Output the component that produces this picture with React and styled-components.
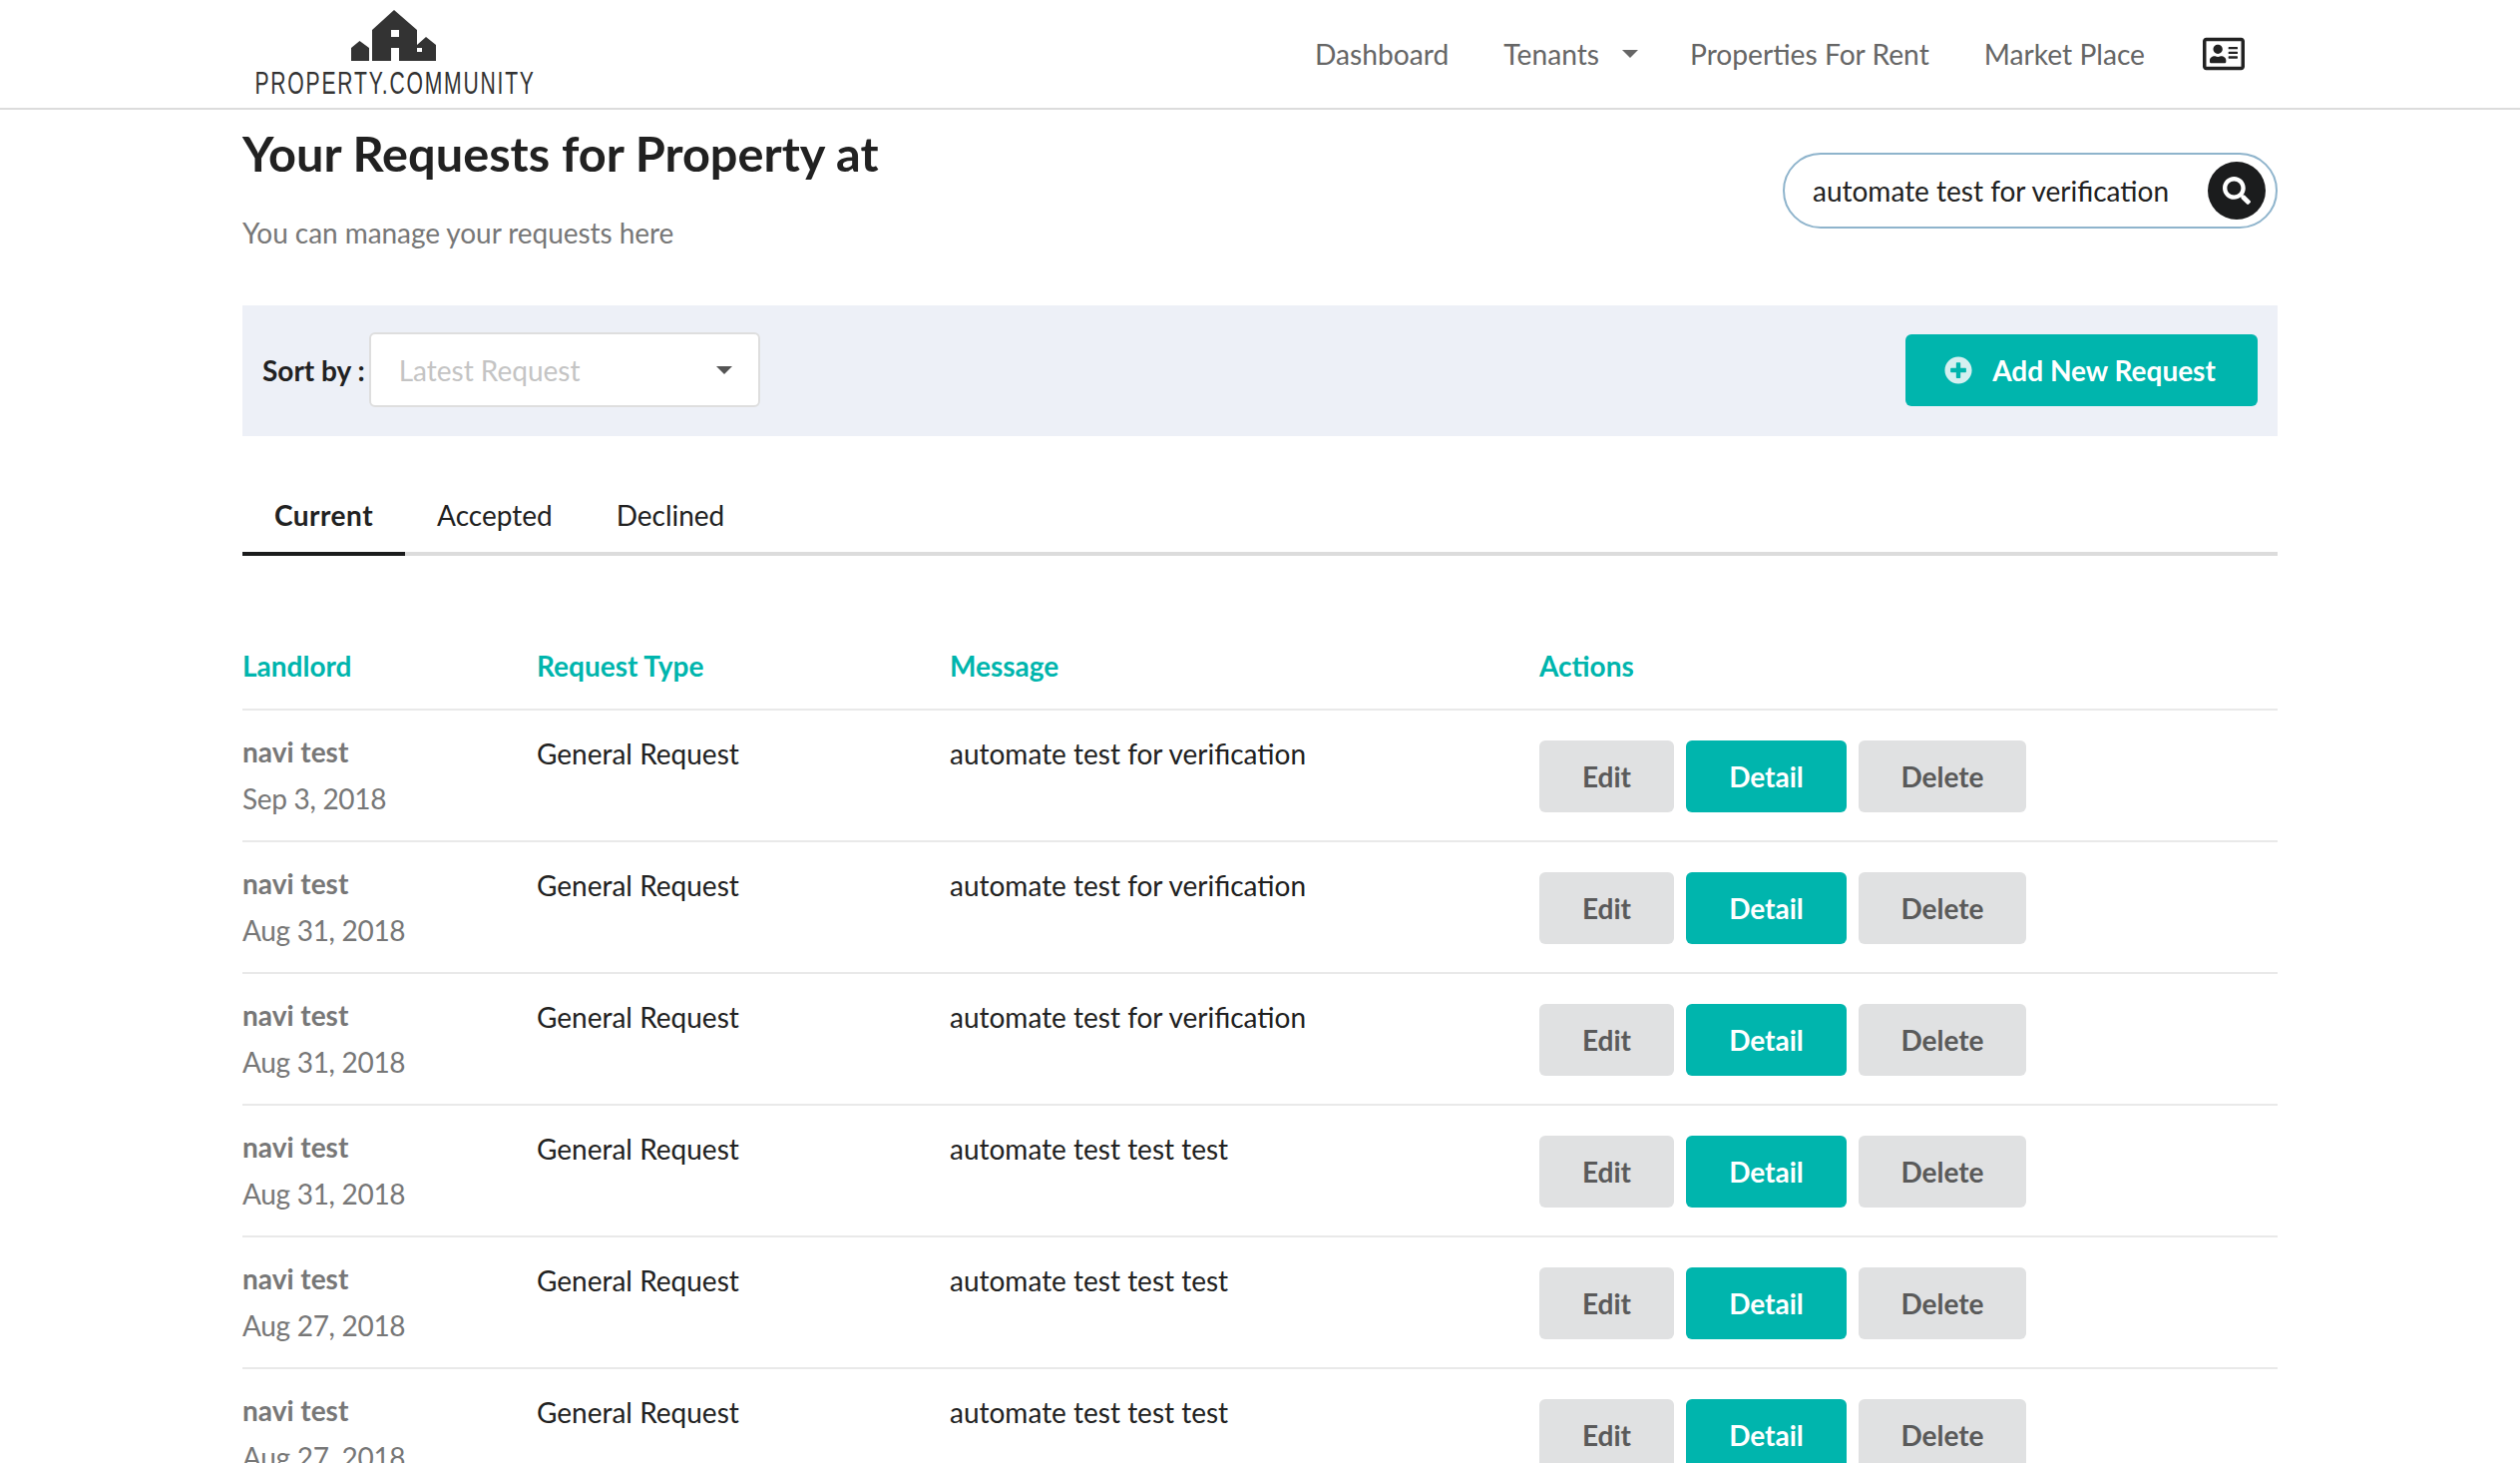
import React from 'react'
import styled, { createGlobalStyle } from 'styled-components'
import { FaSearch, FaPlusCircle, FaRegAddressCard } from 'react-icons/fa'

const GlobalStyle = createGlobalStyle`
    html, body {
        margin: 0;
        padding: 0;
        background: #fff;
        font-family: "Lato", "Liberation Sans", sans-serif;
        overflow: hidden;
    }
    * {
        box-sizing: border-box;
    }
`

const Page = styled.div`
    height: 1466px;
    overflow: hidden;
`

const Header = styled.header`
    height: 110px;
    border-bottom: 2px solid #dcdcdc;
    padding: 0 243px;
    display: flex;
    justify-content: space-between;
`

const Logo = styled.div`
    width: 306px;
    padding-top: 10px;
    display: flex;
    flex-direction: column;
    align-items: center;
`

const LogoMark = styled.svg`
    margin-right: 2px;
`

const LogoText = styled.div`
    font-family: "Liberation Sans", sans-serif;
    font-size: 32px;
    line-height: 26px;
    margin-top: 9px;
    color: #333;
    letter-spacing: 2.7px;
    white-space: nowrap;
    transform: scaleX(0.66);
`

const Nav = styled.nav`
    display: flex;
    align-items: center;
    gap: 55px;
    padding-right: 33px;
    color: #666;
    font-size: 28.2px;
`

const NavItem = styled.span`
    display: flex;
    align-items: center;
    gap: 23px;
    margin-right: -3px;
`

const Caret = styled.i`
    width: 0;
    height: 0;
    border-left: ${props => props.$size}px solid transparent;
    border-right: ${props => props.$size}px solid transparent;
    border-top: ${props => props.$size}px solid ${props => props.$color};
`

const CardIcon = styled(FaRegAddressCard)`
    font-size: 42px;
    margin-left: 3px;
    color: #222;
`

const Main = styled.main`
    padding: 0 243px;
`

const TitleRow = styled.div`
    display: flex;
    justify-content: space-between;
    height: 196px;
`

const Title = styled.h1`
    margin: 15px 0 0;
    font-size: 48.7px;
    line-height: 56px;
    font-weight: 700;
    color: #212121;
`

const Subtitle = styled.p`
    margin: 34px 0 0;
    font-size: 28px;
    line-height: 36px;
    letter-spacing: -0.06px;
    color: #777;
`

const Search = styled.div`
    margin-top: 43px;
    width: 496px;
    height: 76px;
    border: 2px solid #8fb4cc;
    border-radius: 38px;
    padding: 0 10px 0 28px;
    display: flex;
    align-items: center;
    justify-content: space-between;
    font-size: 28px;
    color: #212121;
`

const SearchButton = styled.span`
    width: 58px;
    height: 58px;
    border-radius: 50%;
    background: #1b1c1d;
    color: #fff;
    display: flex;
    align-items: center;
    justify-content: center;
    font-size: 28px;
`

const SortBar = styled.div`
    height: 131px;
    background: #edf0f7;
    padding: 0 20px 2px;
    display: flex;
    align-items: center;
    justify-content: space-between;
`

const SortGroup = styled.div`
    display: flex;
    align-items: center;
    gap: 4px;
`

const SortLabel = styled.span`
    font-size: 28px;
    font-weight: 700;
    color: #212121;
`

const Select = styled.div`
    width: 392px;
    height: 75px;
    background: #fff;
    border: 2px solid #dedede;
    border-radius: 6px;
    padding: 0 26px 0 28px;
    display: flex;
    align-items: center;
    justify-content: space-between;
    font-size: 28px;
    color: #c4c4c4;
`

const AddButton = styled.div`
    width: 353px;
    height: 72px;
    background: #00b5ad;
    border-radius: 6px;
    color: #fff;
    font-size: 28px;
    font-weight: 700;
    display: flex;
    align-items: center;
    justify-content: center;
    gap: 20px;
`

const AddIcon = styled(FaPlusCircle)`
    font-size: 28px;
    margin-left: -3px;
    color: #d4eff0;
`

const Tabs = styled.div`
    margin-top: 53px;
    height: 67px;
    display: flex;
    border-bottom: 4px solid #dcdcdc;
`

const Tab = styled.div`
    height: 67px;
    padding: 0 32px;
    line-height: 52px;
    font-size: 28px;
    font-weight: ${props => (props.$active ? 700 : 400)};
    letter-spacing: ${props => (props.$active ? '0.5px' : '0')};
    color: #212121;
    border-bottom: 4px solid ${props => (props.$active ? '#1b1c1d' : 'transparent')};
`

const Row = styled.div`
    display: grid;
    grid-template-columns: 295px 414px 591px 1fr;
    height: 132px;
    border-bottom: 2px solid #e9e9e9;
    font-size: 28px;
    color: #212121;
`

const HeadRow = styled(Row)`
    margin-top: 66px;
    height: 89px;
    align-items: center;
    font-weight: 700;
    color: #00b5ad;
`

const Cell = styled.div`
    padding-top: 20px;
    line-height: 47px;
`

const LandlordCell = styled(Cell)`
    padding-top: 18px;
`

const LandlordName = styled.div`
    font-weight: 700;
    color: #777;
`

const LandlordDate = styled.div`
    color: #777;
    letter-spacing: -0.3px;
`

const Actions = styled.div`
    padding-top: 30px;
    display: flex;
    gap: 12px;
`

const ActionButton = styled.div`
    width: ${props => props.$width}px;
    height: 72px;
    border-radius: 6px;
    background: ${props => (props.$primary ? '#00b5ad' : '#e0e1e2')};
    color: ${props => (props.$primary ? '#fff' : '#5a5a5a')};
    font-weight: 700;
    display: flex;
    align-items: center;
    justify-content: center;
`

const requests = [
    { date: 'Sep 3, 2018', message: 'automate test for verification' },
    { date: 'Aug 31, 2018', message: 'automate test for verification' },
    { date: 'Aug 31, 2018', message: 'automate test for verification' },
    { date: 'Aug 31, 2018', message: 'automate test test test' },
    { date: 'Aug 27, 2018', message: 'automate test test test' },
    { date: 'Aug 27, 2018', message: 'automate test test test' },
]

const LogoHouses = () => (
    <LogoMark width="86" height="51" viewBox="0 0 86 51">
        <path
            fill="#333"
            fillRule="evenodd"
            d="M0 38 L8.5 31 L18 38 V51 H0 Z M21 20 L43 0 L66 20 V51 H48 V38 H40 V51 H21 Z M40 20 V27 H48 V20 Z M66 35 L75 27 L85 35 V51 H66 Z M66 38 V42 H71 V38 Z"
        />
    </LogoMark>
)

const App = () => {
    return (
        <Page>
            <GlobalStyle />
            <Header>
                <Logo>
                    <LogoHouses />
                    <LogoText>PROPERTY.COMMUNITY</LogoText>
                </Logo>
                <Nav>
                    <span>Dashboard</span>
                    <NavItem>
                        Tenants
                        <Caret $size={8} $color="#666" />
                    </NavItem>
                    <span>Properties For Rent</span>
                    <span>Market Place</span>
                    <CardIcon />
                </Nav>
            </Header>

            <Main>
                <TitleRow>
                    <div>
                        <Title>Your Requests for Property at</Title>
                        <Subtitle>You can manage your requests here</Subtitle>
                    </div>
                    <Search>
                        automate test for verification
                        <SearchButton>
                            <FaSearch />
                        </SearchButton>
                    </Search>
                </TitleRow>

                <SortBar>
                    <SortGroup>
                        <SortLabel>Sort by :</SortLabel>
                        <Select>
                            Latest Request
                            <Caret $size={8} $color="#555" />
                        </Select>
                    </SortGroup>
                    <AddButton>
                        <AddIcon />
                        Add New Request
                    </AddButton>
                </SortBar>

                <Tabs>
                    <Tab $active>Current</Tab>
                    <Tab>Accepted</Tab>
                    <Tab>Declined</Tab>
                </Tabs>

                <HeadRow>
                    <div>Landlord</div>
                    <div>Request Type</div>
                    <div>Message</div>
                    <div>Actions</div>
                </HeadRow>

                {requests.map((request, i) => (
                    <Row key={i}>
                        <LandlordCell>
                            <LandlordName>navi test</LandlordName>
                            <LandlordDate>{request.date}</LandlordDate>
                        </LandlordCell>
                        <Cell>General Request</Cell>
                        <Cell>{request.message}</Cell>
                        <Actions>
                            <ActionButton $width={135}>Edit</ActionButton>
                            <ActionButton $width={161} $primary>Detail</ActionButton>
                            <ActionButton $width={168}>Delete</ActionButton>
                        </Actions>
                    </Row>
                ))}
            </Main>
        </Page>
    )
}

export default App
